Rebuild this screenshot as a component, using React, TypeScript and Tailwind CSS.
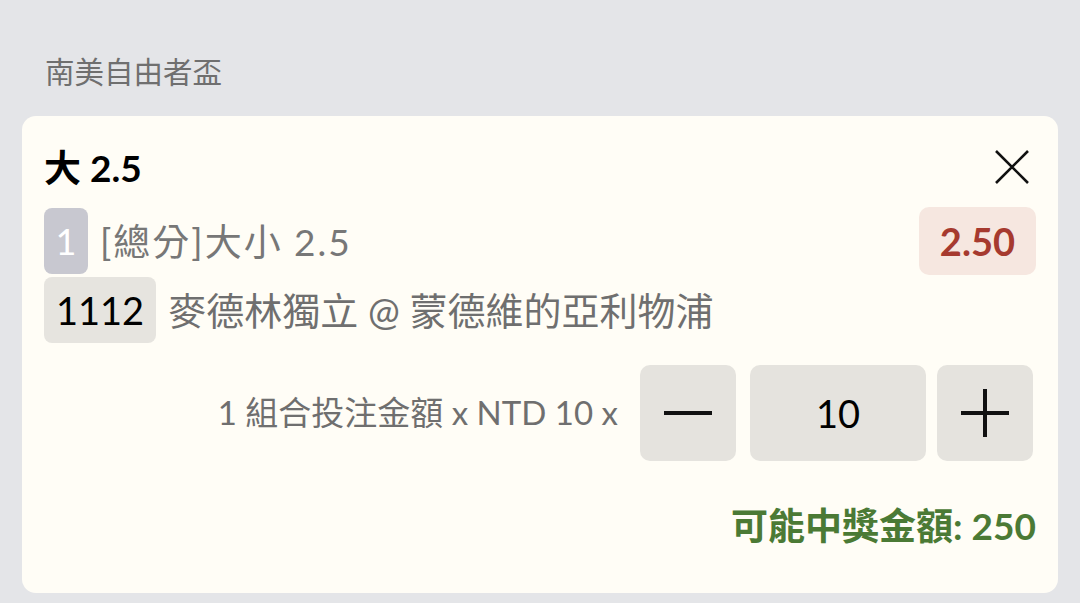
import React, { useState } from "react";

const FONT = "font-['Lato','Noto_Sans_CJK_TC',sans-serif]";

export default function App() {
  const [stake, setStake] = useState(10);
  const odds = 2.5;

  return (
    <div className={`w-[1080px] h-[603px] bg-[#e4e5e8] overflow-hidden ${FONT}`}>
      {/* League header */}
      <div className="h-[116px] pl-[45px] pt-[51px]">
        <span className="text-[29.5px] leading-[42px] text-[#6f6f6f]">南美自由者盃</span>
      </div>

      {/* Bet card */}
      <div className="mx-[22px] h-[477px] rounded-[14px] bg-[#fffdf6] px-[22px] pt-[26px]">
        <div className="flex items-center justify-between h-[50px]">
          <span className="text-[37px] font-bold text-black leading-none">大 2.5</span>
          <button className="w-[40px] h-[40px] mr-[4px] flex items-center justify-center">
            <svg width="36" height="36" viewBox="0 0 36 36" fill="none" stroke="#111" strokeWidth="2.6">
              <path d="M2 2 L34 34 M34 2 L2 34" />
            </svg>
          </button>
        </div>

        <div className="flex items-center justify-between mt-[16px] h-[66px]">
          <div className="flex items-center gap-[12px]">
            <span className="w-[44px] h-[66px] rounded-[8px] bg-[#c8c8d0] text-white text-[36px] flex items-center justify-center">1</span>
            <span className="text-[37px] tracking-[2px] text-[#777] leading-none">[總分]大小 2.5</span>
          </div>
          <span className="h-[68px] px-[21px] rounded-[10px] bg-[#f6e7e0] text-[#a63a2f] text-[38px] font-bold flex items-center">2.50</span>
        </div>

        <div className="flex items-center gap-[12px] mt-[3px] h-[66px]">
          <span className="h-[66px] px-[12px] rounded-[8px] bg-[#e6e4df] text-black text-[38px] flex items-center">1112</span>
          <span className="text-[38px] text-[#6f6f6f] leading-none">麥德林獨立 @ 蒙德維的亞利物浦</span>
        </div>

        <div className="flex items-center justify-end mt-[22px] h-[96px] pr-[3px]">
          <span className="text-[33px] text-[#6f6f6f] mr-[22px]">1 組合投注金額 x NTD {stake} x</span>
          <button
            onClick={() => setStake((s) => Math.max(0, s - 10))}
            className="w-[96px] h-[96px] rounded-[10px] bg-[#e5e3de] flex items-center justify-center"
          >
            <svg width="50" height="50" viewBox="0 0 50 50" stroke="#111" strokeWidth="4">
              <path d="M1 25 H49" />
            </svg>
          </button>
          <div className="w-[176px] h-[96px] ml-[14px] rounded-[10px] bg-[#e5e3de] flex items-center justify-center text-[38px] text-black">
            {stake}
          </div>
          <button
            onClick={() => setStake((s) => s + 10)}
            className="w-[96px] h-[96px] ml-[11px] rounded-[10px] bg-[#e5e3de] flex items-center justify-center"
          >
            <svg width="50" height="50" viewBox="0 0 50 50" stroke="#111" strokeWidth="4">
              <path d="M1 25 H49 M25 1 V49" />
            </svg>
          </button>
        </div>

        <div className="flex justify-end mt-[46px]">
          <span className="text-[37px] font-bold text-[#4b7a35] leading-none">可能中獎金額: {stake * odds * 10}</span>
        </div>
      </div>
    </div>
  );
}
